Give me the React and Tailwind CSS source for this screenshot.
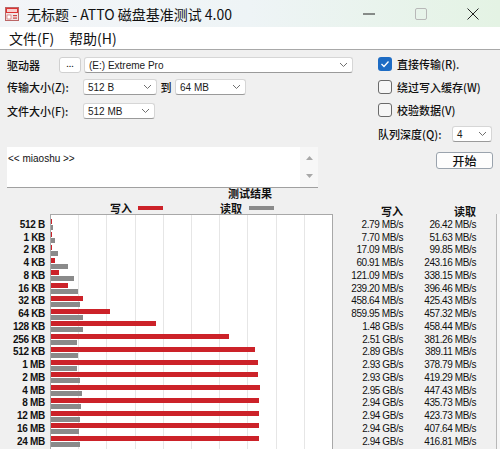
import React from "react";

const MB_PX = 283 / 4096;

const rows = [
  ["512 B", 2.79, "2.79 MB/s", 26.42, "26.42 MB/s"],
  ["1 KB", 7.7, "7.70 MB/s", 51.63, "51.63 MB/s"],
  ["2 KB", 17.09, "17.09 MB/s", 99.85, "99.85 MB/s"],
  ["4 KB", 60.91, "60.91 MB/s", 243.16, "243.16 MB/s"],
  ["8 KB", 121.09, "121.09 MB/s", 338.15, "338.15 MB/s"],
  ["16 KB", 239.2, "239.20 MB/s", 396.46, "396.46 MB/s"],
  ["32 KB", 458.64, "458.64 MB/s", 425.43, "425.43 MB/s"],
  ["64 KB", 859.95, "859.95 MB/s", 457.32, "457.32 MB/s"],
  ["128 KB", 1.48 * 1024, "1.48 GB/s", 458.44, "458.44 MB/s"],
  ["256 KB", 2.51 * 1024, "2.51 GB/s", 381.26, "381.26 MB/s"],
  ["512 KB", 2.89 * 1024, "2.89 GB/s", 389.11, "389.11 MB/s"],
  ["1 MB", 2.93 * 1024, "2.93 GB/s", 378.79, "378.79 MB/s"],
  ["2 MB", 2.93 * 1024, "2.93 GB/s", 419.29, "419.29 MB/s"],
  ["4 MB", 2.95 * 1024, "2.95 GB/s", 447.43, "447.43 MB/s"],
  ["8 MB", 2.94 * 1024, "2.94 GB/s", 435.73, "435.73 MB/s"],
  ["12 MB", 2.94 * 1024, "2.94 GB/s", 423.73, "423.73 MB/s"],
  ["16 MB", 2.94 * 1024, "2.94 GB/s", 407.64, "407.64 MB/s"],
  ["24 MB", 2.94 * 1024, "2.94 GB/s", 416.81, "416.81 MB/s"],
  // 下一行只露出一点红条
  ["", 2.94 * 1024, "", 420.5, ""],
];

function Chevron() {
  return (
    <svg width="9" height="6" viewBox="0 0 9 6" className="shrink-0">
      <path d="M1 1 L4.5 4.5 L8 1" fill="none" stroke="#707070" strokeWidth="1" />
    </svg>
  );
}

function Select({ value, className }) {
  return (
    <div
      className={`h-[16px] flex items-center justify-between pl-[4px] pr-[4px] bg-white border border-[#d6d6d6] border-b-[#9a9a9a] rounded-[3px] text-[10px] font-['Liberation_Sans',sans-serif] text-[#1a1a1a] ${className}`}
    >
      <span>{value}</span>
      <Chevron />
    </div>
  );
}

function Check({ checked, label }) {
  return (
    <div className="flex items-center h-[14px]">
      {checked ? (
        <div className="w-[14px] h-[14px] rounded-[3px] bg-[#1d6cc4] flex items-center justify-center">
          <svg width="10" height="8" viewBox="0 0 10 8">
            <path d="M1.5 4 L4 6.5 L8.5 1.5" fill="none" stroke="#fff" strokeWidth="1.3" />
          </svg>
        </div>
      ) : (
        <div className="w-[14px] h-[14px] rounded-[3px] border border-[#6a6a6a] bg-[#f6f6f6]" />
      )}
      <span className="ml-[5px] text-[11px] font-medium leading-none">{label}</span>
    </div>
  );
}

export default function App() {
  return (
    <div className="w-[500px] h-[449px] overflow-hidden bg-[#f0f0f0] text-[#111] font-['Noto_Sans_CJK_SC','Liberation_Sans',sans-serif]">
      {/* 标题栏 */}
      <div className="h-[27px] flex items-center bg-gradient-to-r from-[#f3f5f8] via-[#eef4f6] to-[#e4f3e4]">
        <svg width="14" height="14" viewBox="0 0 14 14" className="ml-[5px]">
          <rect x="0.5" y="0.5" width="13" height="13" fill="#f2e6e6" stroke="#b66" />
          <rect x="1" y="1" width="12" height="5" fill="#d33" />
          <rect x="2" y="2" width="10" height="3" fill="#f8d0d0" />
          <rect x="2" y="8" width="4" height="4" fill="#fff" stroke="#c55" strokeWidth="0.6" />
          <rect x="8" y="8" width="4" height="1.2" fill="#c44" />
          <rect x="8" y="10.5" width="4" height="1.2" fill="#c44" />
        </svg>
        <span className="ml-[8px] text-[14px] leading-none">无标题 - ATTO 磁盘基准测试 4.00</span>
        <div className="ml-auto flex h-full">
          <div className="w-[52px] flex items-center justify-center">
            <svg width="12" height="2" viewBox="0 0 12 2">
              <path d="M0 1 H12" stroke="#222" strokeWidth="1" />
            </svg>
          </div>
          <div className="w-[52px] flex items-center justify-center">
            <svg width="12" height="12" viewBox="0 0 12 12">
              <rect x="0.5" y="0.5" width="11" height="11" rx="1.5" fill="none" stroke="#b8b8b8" />
            </svg>
          </div>
          <div className="w-[51px] mr-[2px] flex items-center justify-center">
            <svg width="12" height="12" viewBox="0 0 12 12">
              <path d="M0.5 0.5 L11.5 11.5 M11.5 0.5 L0.5 11.5" stroke="#222" strokeWidth="1" />
            </svg>
          </div>
        </div>
      </div>

      {/* 菜单栏 */}
      <div className="h-[23px] flex items-center bg-white border-b border-[#a8a8a8] text-[14px]">
        <span className="ml-[9px] w-[60px]">文件(F)</span>
        <span>帮助(H)</span>
      </div>

      {/* 设置区 */}
      <div className="flex text-[11px]">
        <div className="w-[371px] pl-[7px] pt-[7px] shrink-0">
          <div className="flex items-center h-[16px]">
            <span className="w-[52px] font-medium">驱动器</span>
            <div className="w-[22px] h-[16px] bg-white border border-[#d0d0d0] rounded-[3px] flex items-center justify-center text-[9px] leading-none pb-[3px]">
              ...
            </div>
            <Select value="(E:) Extreme Pro" className="ml-[3px] w-[269px]" />
          </div>
          <div className="mt-[6px] flex items-center h-[16px]">
            <span className="w-[76px] font-medium">传输大小(Z):</span>
            <Select value="512 B" className="w-[74px]" />
            <span className="w-[18px] text-center font-medium">到</span>
            <Select value="64 MB" className="w-[71px]" />
          </div>
          <div className="mt-[8px] flex items-center h-[16px]">
            <span className="w-[76px] font-medium">文件大小(F):</span>
            <Select value="512 MB" className="w-[72px]" />
          </div>
          <div className="mt-[28px] w-[311px] h-[41px] flex bg-white border-b border-[#a0a0a0]">
            <div className="flex-1 pl-[1px] pt-[4px] text-[10px] font-['Liberation_Sans',sans-serif]">
              &lt;&lt; miaoshu &gt;&gt;
            </div>
            <div className="w-[18px] flex flex-col items-center justify-between py-[9px] bg-[#f7f7f7]">
              <svg width="7" height="4" viewBox="0 0 7 4">
                <path d="M0 4 L3.5 0 L7 4 Z" fill="#a8a8a8" />
              </svg>
              <svg width="7" height="4" viewBox="0 0 7 4">
                <path d="M0 0 L3.5 4 L7 0 Z" fill="#a8a8a8" />
              </svg>
            </div>
          </div>
        </div>

        <div className="ml-[7px] pt-[7px]">
          <Check checked label="直接传输(R)." />
          <div className="mt-[9px]">
            <Check label="绕过写入缓存(W)" />
          </div>
          <div className="mt-[9px]">
            <Check label="校验数据(V)" />
          </div>
          <div className="mt-[9px] flex items-center h-[16px]">
            <span className="w-[74px] font-medium">队列深度(Q):</span>
            <Select value="4" className="w-[40px]" />
          </div>
          <div className="mt-[10px] ml-[58px] w-[57px] h-[17px] bg-[#fdfdfd] border border-[#9aa3ad] rounded-[3px] flex items-center justify-center text-[12px] font-medium leading-none">
            开始
          </div>
        </div>
      </div>

      {/* 测试结果 */}
      <div className="h-[12px] text-center text-[11px] font-bold leading-[11px]">测试结果</div>
      <div className="h-[14px] flex items-center text-[11px] font-bold leading-none">
        <div className="w-[333px] flex items-center pt-[2px]">
          <span className="ml-[110px] w-[28px]">写入</span>
          <span className="w-[25px] h-[4px] bg-[#cc2229]" />
          <span className="w-[57px]" />
          <span className="w-[29px]">读取</span>
          <span className="w-[25px] h-[4px] bg-[#8a8a8a]" />
        </div>
        <span className="w-[70px] text-right mt-[8px]">写入</span>
        <span className="w-[73px] text-right mt-[8px]">读取</span>
      </div>

      <div className="flex font-['Liberation_Sans',sans-serif]">
        <div className="w-[50px] pr-[5px] pt-[4.6px] text-right text-[10px] font-bold tracking-[-0.3px]">
          {rows.map((r, i) => (
            <div key={i} className="h-[12.76px] flex items-center justify-end leading-none">
              {r[0]}
            </div>
          ))}
        </div>
        <div className="w-[283px] relative bg-white border-l border-t border-r border-[#a8a8a8] pt-[3.6px]">
          <div className="absolute inset-0 flex">
            {Array.from({ length: 10 }).map((_, i) => (
              <div key={i} className="flex-1 border-r border-[#e6e6e6] last:border-r-0" />
            ))}
          </div>
          {rows.map((r, i) => (
            <div key={i} className="relative h-[12.76px] flex flex-col justify-center gap-[1px]">
              <div className="h-[5px] bg-[#cc2229]" style={{ width: Math.max(r[1] * MB_PX, 0.5) }} />
              <div className="h-[5px] bg-[#8a8a8a]" style={{ width: Math.max(r[3] * MB_PX, 0.5) }} />
            </div>
          ))}
        </div>
        <div className="w-[70px] pt-[4.6px] text-[10px] tracking-[-0.4px]">
          {rows.map((r, i) => (
            <div key={i} className="h-[12.76px] flex items-center justify-end leading-none">
              {r[2]}
            </div>
          ))}
        </div>
        <div className="w-[73px] pt-[4.6px] text-[10px] tracking-[-0.4px]">
          {rows.map((r, i) => (
            <div key={i} className="h-[12.76px] flex items-center justify-end leading-none">
              {r[4]}
            </div>
          ))}
        </div>
        <div className="ml-auto w-[4px] border-l border-[#b8b8b8] bg-[#f6f6f6]" />
      </div>
    </div>
  );
}
